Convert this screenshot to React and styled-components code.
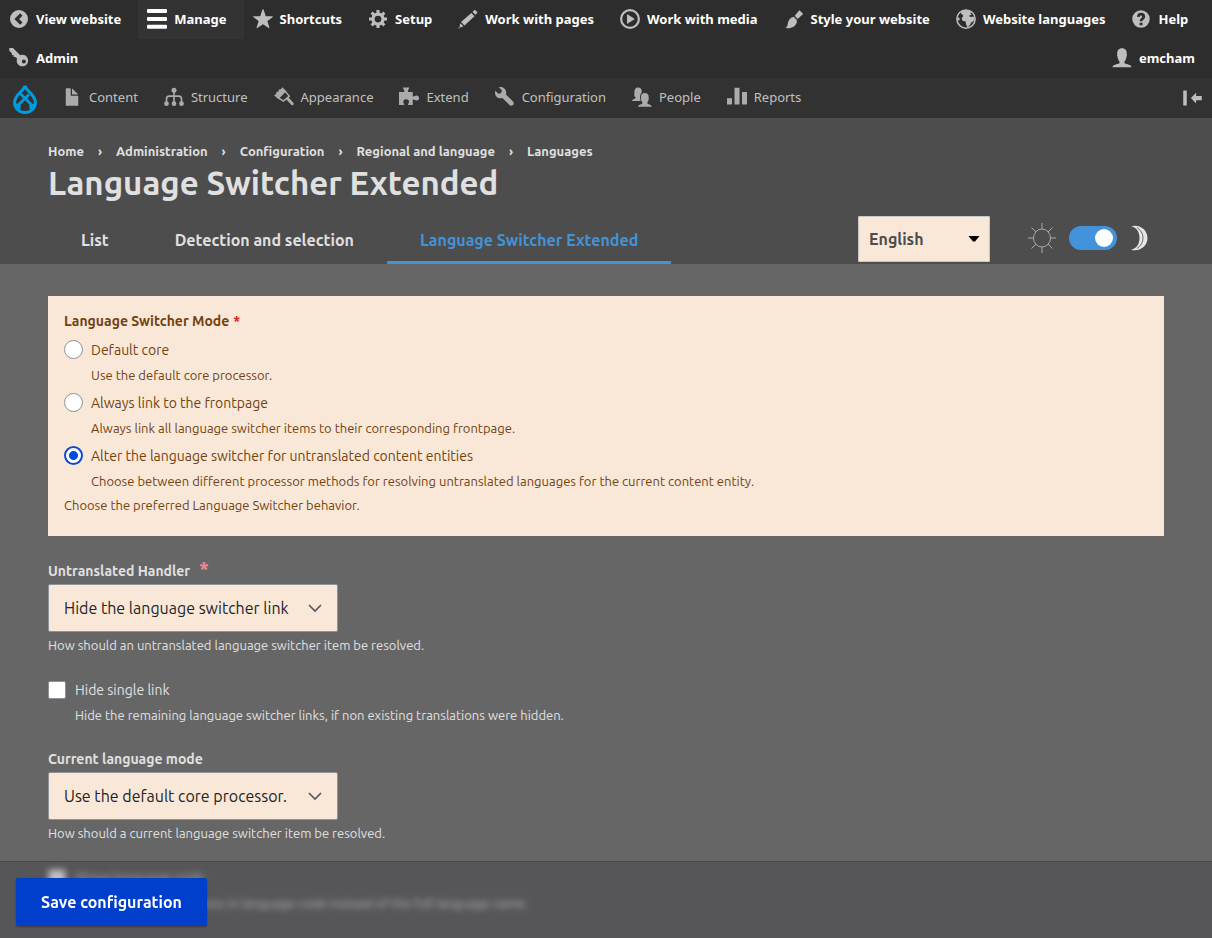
import React, { useState } from "react";
import styled, { createGlobalStyle } from "styled-components";

const SHORTCUTS = [
  { label: "View website", icon: "back" },
  { label: "Manage", icon: "menu", active: true },
  { label: "Shortcuts", icon: "star" },
  { label: "Setup", icon: "cog" },
  { label: "Work with pages", icon: "pencil" },
  { label: "Work with media", icon: "play" },
  { label: "Style your website", icon: "brush" },
  { label: "Website languages", icon: "globe" },
  { label: "Help", icon: "help" },
  { label: "Admin", icon: "key" },
];

const TRAY = [
  { label: "Content", icon: "file" },
  { label: "Structure", icon: "orgchart" },
  { label: "Appearance", icon: "roller" },
  { label: "Extend", icon: "puzzle" },
  { label: "Configuration", icon: "wrench" },
  { label: "People", icon: "people" },
  { label: "Reports", icon: "chart" },
];

const BREADCRUMBS = [
  "Home",
  "Administration",
  "Configuration",
  "Regional and language",
  "Languages",
];

const TABS = [
  "List",
  "Detection and selection",
  "Language Switcher Extended",
];

const MODES = [
  {
    id: "core",
    label: "Default core",
    help: "Use the default core processor.",
  },
  {
    id: "front",
    label: "Always link to the frontpage",
    help: "Always link all language switcher items to their corresponding frontpage.",
  },
  {
    id: "alter",
    label: "Alter the language switcher for untranslated content entities",
    help: "Choose between different processor methods for resolving untranslated languages for the current content entity.",
  },
];

const ICONS = {
  back: (
    <path
      fillRule="evenodd"
      d="M8 .8a7.2 7.2 0 1 0 0 14.4A7.2 7.2 0 0 0 8 .8zM8.9 3.4 4.3 8l4.6 4.6 1.9-1.9L8.1 8l2.7-2.7z"
    />
  ),
  menu: (
    <path d="M.8 0h14.4a.8.8 0 0 1 .8.8v1.6a.8.8 0 0 1-.8.8H.8a.8.8 0 0 1-.8-.8V.8A.8.8 0 0 1 .8 0zM.8 6.3h14.4a.8.8 0 0 1 .8.8v1.6a.8.8 0 0 1-.8.8H.8a.8.8 0 0 1-.8-.8V7.1a.8.8 0 0 1 .8-.8zM.8 12.6h14.4a.8.8 0 0 1 .8.8V15a.8.8 0 0 1-.8.8H.8A.8.8 0 0 1 0 15v-1.6a.8.8 0 0 1 .8-.8z" />
  ),
  star: (
    <path d="M8 .2c.2 0 .4.1.5.4l1.7 5.1h5.2c.5 0 .7.4.2.8l-4.1 3.1 1.6 5.2c.1.5-.1.7-.5.4L8 12.1l-4.6 3.1c-.4.3-.6.1-.5-.4l1.6-5.2L.4 6.5c-.5-.4-.3-.8.2-.8h5.2L7.5.6c.1-.3.3-.4.5-.4z" />
  ),
  cog: (
    <>
      <circle cx="8" cy="8" r="4" fill="none" stroke="currentColor" strokeWidth="2.6" />
      <path
        fill="none"
        stroke="currentColor"
        strokeWidth="2.5"
        d="M8 .8v3M8 12.2v3M.8 8h3M12.2 8h3M2.9 2.9 5 5M11 11l2.1 2.1M13.1 2.9 11 5M5 11l-2.1 2.1"
      />
    </>
  ),
  pencil: (
    <path d="m11.600 2.300 2.300 2.300.7-.7.700-.7c.3-.3.2-.6 0-.9l-1.300-1.300c-.3-.3-.7-.3-1 0zM10.700 3.200l2.500 2.500-8 7.500-2.800-2.800zM1.900 11.400l2.400 2.400-2.100 1-1-1zM.8 14.300l.8.8-1.400.6z" />
  ),
  play: (
    <>
      <circle cx="8" cy="8" r="7.1" fill="none" stroke="currentColor" strokeWidth="1.8" />
      <path d="M5.6 4.7v6.6a.4.4 0 0 0 .6.3l5.1-3.2a.5.5 0 0 0 0-.8L6.2 4.4a.4.4 0 0 0-.6.3z" />
    </>
  ),
  brush: (
    <path d="M12.6 1.2 15 3.5c.3.3.2.7-.2.9l-3.900 3.500-2.300-2.500 3.200-3.900c.2-.4.500-.5.800-.3zM7.800 6.200l2.400 2.500c.5 1.700-.4 3.900-2.200 5.200-1.900 1.400-4.500 1.600-7.100 1.300 1.200-.6 1.700-1.300 2-2.900.4-2.400 1.600-5.600 4.900-6.100z" />
  ),
  globe: (
    <>
      <circle cx="8" cy="8" r="7.3" fill="none" stroke="currentColor" strokeWidth="1.2" />
      <path d="M3.6 3.2 5.5 1.2 8 .7l4.4 1.4-.8 1.4.9 1-2.2.8 1.1 1 2.6-.4 1 1.9-1.4 2.3-1.3.5-1.3 2.4-1.7 1.8-1.3-2.6-.3-2.3L5.2 9.4 4.5 7.2l1.4-1.6-.8-1.3z" />
      <path d="M1.3 6.2 3 7.5 2.6 9.4l-1.5-.8z" />
    </>
  ),
  help: (
    <path
      fillRule="evenodd"
      d="M8 1a7 7 0 1 0 0 14A7 7 0 0 0 8 1zM6.9 10.9h2.3v2.1H6.9zM4.8 6.2C4.9 4.2 6.1 3 8.1 3c1.9 0 3.2 1.1 3.2 2.9 0 2.2-2 2.3-2.1 3.9H7c0-2.4 1.9-2.5 1.9-3.7 0-.6-.3-.9-.9-.9s-.9.4-1 1.1z"
    />
  ),
  key: (
    <path
      fillRule="evenodd"
      d="M.2 0h3L9 5.7c2.2-.6 4.2 0 5.3 1.5 1.5 1.9 1.3 4.8-.5 6.4-2 1.7-4.9 1.3-6.5-.5C6 11.6 5.9 9.9 6.5 8.4L5 7.1H3.7V5.7L2.3 5.6V4.1L.2 2.1zM11.9 9.2a1.6 1.6 0 1 0 0 3.2 1.6 1.6 0 0 0 0-3.2z"
    />
  ),
  person: (
    <path d="M.5 15.3c0-1.7 2.4-2 4.4-2.7.9-.3 1.3-.8 1.3-1.5C5 9.9 4.5 8.3 4.4 6.8 3.9 6 4 5.3 4.2 5 3.9 2 5.4.2 8 .2S12.1 2 11.8 5c.2.3.3 1-.2 1.800-.1 1.500-.6 3.100-1.800 4.300 0 .7.400 1.200 1.300 1.500 2 .7 4.400 1 4.400 2.700z" />
  ),
  file: (
    <path d="M12.5 7h-5A.5.5 0 0 1 7 6.500v-5a.5.5 0 0 0-.5-.5h-3a.5.5 0 0 0-.5.500v13a.5.5 0 0 0 .5.500h9a.5.5 0 0 0 .5-.5v-7a.5.5 0 0 0-.5-.5zM8.500 6h4c.3 0 .3-.2.100-.4L8.400 1.400c-.2-.2-.4-.1-.4.1v4c0 .3.200.5.500.5z" />
  ),
  orgchart: (
    <>
      <path
        fill="none"
        stroke="currentColor"
        strokeWidth="1.3"
        d="M8 3v10M2 13V9.5C2 8 3 7.3 4.2 7.3h7.6C13 7.3 14 8 14 9.5V13"
      />
      <circle cx="8" cy="2.5" r="2" />
      <circle cx="2" cy="13.3" r="1.9" />
      <circle cx="8" cy="13.3" r="1.9" />
      <circle cx="14" cy="13.3" r="1.9" />
    </>
  ),
  roller: (
    <>
      <path d="M0 6.5 1.8 5.6 1.9 4 3.6 3.6 4 1.9 5.8 1.5 6.7.2 9.5 3 3.2 9.4z" />
      <path fill="none" stroke="currentColor" strokeWidth="1.2" d="M3.6 8.8 9 3.4l3.2 3.900-4.600 4z" />
      <path d="m9.5 9.6 1.9-1.7 4.2 4.9c.8 1-.7 2.5-1.7 1.6z" />
    </>
  ),
  puzzle: (
    <path d="M0 4h4.2V2.800c0-.8-1-1.100-1-2.500h5c0 1.400-1 1.700-1 2.500V4H11v3.500c1.200.5 1.800-.7 3-.7a2 2 0 0 1 0 4c-1.200 0-1.800-1.100-3-.6v4.100H7.200c-.2-.8.8-1.500.8-2.500a2.300 2 0 0 0-4.600 0c0 1 1 1.700.8 2.500H0z" />
  ),
  wrench: (
    <path d="M14.416 11.586l-5.666-5.665c.15-.449.252-.921.252-1.421 0-2.485-2.016-4.5-4.502-4.5-.505 0-.981.102-1.434.255l2.431 2.431-.588 2.196-2.196.588L.268 3.025C.106 3.489 0 3.981 0 4.500 0 6.986 2.014 9 4.500 9c.5 0 .972-.102 1.421-.251l5.667 5.665c.781.781 2.047.781 2.828 0s.781-2.047 0-2.828z" />
  ),
  people: (
    <>
      <path d="M7.5 11.2H0c0-1.300 1.400-1.500 2.300-1.900.6-.3.500-.9.200-1.300C1.600 6.900 1.900 5.900 1.900 4 1.900 1.500 2.900.3 4.900.3s3.200 1.200 2.900 3.900z" />
      <path
        stroke="#323232"
        strokeWidth="1.6"
        paintOrder="stroke"
        d="M4.800 15.800c0-1.500 1.500-1.800 2.900-2.300.8-.3.800-.9.400-1.500-.9-1.300-.9-2.500-.9-3.900 0-2.200 1.200-3.300 3-3.300s3.200 1.100 3.200 3.300c0 1.400 0 2.600-.9 3.900-.4.600-.4 1.200.4 1.500 1.400.5 2.900.8 2.900 2.300z"
      />
    </>
  ),
  chart: <path d="M0 9h4v5H0zM6 .5h4V14H6zM12 4h4v10h-4z" />,
  collapse: (
    <path d="M1 2h2.8v12H1zM7.1 8l4.2-4.2v2.5h4.5v3.5h-4.5v2.5z" />
  ),
};

const Icon = ({ name }) => (
  <IconSvg viewBox="0 0 16 16" aria-hidden="true">
    {ICONS[name]}
  </IconSvg>
);

const SelectField = ({ id, label, value, help, required }) => (
  <div>
    <FieldLabel htmlFor={id}>
      {label}
      {required && <Asterisk>*</Asterisk>}
    </FieldLabel>
    <SelectWrap>
      <FieldSelect id={id} defaultValue={value}>
        <option>{value}</option>
      </FieldSelect>
      <Chevron viewBox="0 0 14 9" aria-hidden="true">
        <path d="M1 1l6 6 6-6" fill="none" stroke="currentColor" strokeWidth="1.6" />
      </Chevron>
    </SelectWrap>
    <Help>{help}</Help>
  </div>
);

const CheckField = ({ label, help }) => (
  <div>
    <Choice>
      <Checkbox type="checkbox" />
      {label}
    </Choice>
    <Help $indent>{help}</Help>
  </div>
);

const App = () => {
  const [mode, setMode] = useState("alter");
  const [dark, setDark] = useState(true);

  return (
    <>
      <GlobalStyle />
      <Page>
        <Toolbar aria-label="Administration toolbar">
          {SHORTCUTS.map(({ label, icon, active }) => (
            <ToolbarLink key={label} href="#" $active={active}>
              <Icon name={icon} />
              {label}
            </ToolbarLink>
          ))}
          <UserLink href="#">
            <Icon name="person" />
            emcham
          </UserLink>
        </Toolbar>
        <Tray aria-label="Administration menu">
          <HomeLink href="#" aria-label="Home">
            <Drop viewBox="0 0 24 30">
              <g fill="none" stroke="currentColor">
                <path
                  strokeWidth="3"
                  d="M12 1.8C10.8 7 1.6 10.6 1.6 18.6a10.4 10 0 0 0 20.8 0C22.4 10.6 13.2 7 12 1.8z"
                />
                <path
                  strokeWidth="2.8"
                  d="M7.500 9.800 18 20.200c1.200 1.200 2.500 1.200 3.500.4M16 10.500 6 20.200c-1.200 1.200-2.500 1.200-3.500.4M6.500 25.500c-1-2-.5-3.800.6-5M17.500 25.500c1-2 .5-3.800-.6-5"
                />
              </g>
            </Drop>
          </HomeLink>
          {TRAY.map(({ label, icon }) => (
            <TrayLink key={label} href="#">
              <Icon name={icon} />
              {label}
            </TrayLink>
          ))}
          <CollapseButton aria-label="Vertical orientation">
            <Icon name="collapse" />
          </CollapseButton>
        </Tray>

        <Header>
          <Breadcrumb aria-label="Breadcrumb">
            {BREADCRUMBS.map((crumb, i) => (
              <React.Fragment key={crumb}>
                {i > 0 && <span>›</span>}
                <a href="#">{crumb}</a>
              </React.Fragment>
            ))}
          </Breadcrumb>
          <Title>Language Switcher Extended</Title>
          <TabRow>
            {TABS.map((tab, i) => (
              <Tab key={tab} href="#" $active={i === 2}>
                {tab}
              </Tab>
            ))}
            <Tools>
              <SelectWrap>
                <LangSelect aria-label="Language" defaultValue="English">
                  <option>English</option>
                </LangSelect>
                <Caret viewBox="0 0 12 6" aria-hidden="true">
                  <path d="M.5 0h11L7 5.5H5z" />
                </Caret>
              </SelectWrap>
              <ThemeSwitch>
                <Sun viewBox="0 0 28 30" aria-hidden="true">
                  <ellipse cx="14" cy="15" rx="8.5" ry="9" />
                  <path d="M14 0v6M14 24v6M0 15h5.500M22.500 15H28M3.500 4.500 8 9M20 21l4.500 4.500M24.500 4.500 20 9M8 21l-4.500 4.500" />
                </Sun>
                <Switch
                  type="checkbox"
                  role="switch"
                  aria-label="Dark mode"
                  checked={dark}
                  onChange={() => setDark(!dark)}
                />
                <Moon viewBox="0 0 18 26" aria-hidden="true">
                  <path
                    fill="currentColor"
                    d="M1 1.3C8.500-1 17.500 4 17.500 13S8.500 27 1 24.700c5.500-1 8.500-5.500 8.500-11.700S6.500 2.300 1 1.300z"
                  />
                  <path
                    fill="none"
                    stroke="#4d4d4d"
                    strokeWidth="0.8"
                    d="M7 2.5c3.8 2.5 6 6 6 10.500s-2.200 8-6 10.500"
                  />
                </Moon>
              </ThemeSwitch>
            </Tools>
          </TabRow>
        </Header>

        <Form onSubmit={(event) => event.preventDefault()}>
          <Fields>
            <Panel>
              <Legend>
                Language Switcher Mode<Asterisk $small>*</Asterisk>
              </Legend>
              {MODES.map(({ id, label, help }) => (
                <ModeItem key={id}>
                  <Choice>
                    <Radio
                      type="radio"
                      name="mode"
                      checked={mode === id}
                      onChange={() => setMode(id)}
                    />
                    {label}
                  </Choice>
                  <Help $indent>{help}</Help>
                </ModeItem>
              ))}
              <PanelNote>Choose the preferred Language Switcher behavior.</PanelNote>
            </Panel>
            <SelectField
              id="untranslated"
              label="Untranslated Handler"
              value="Hide the language switcher link"
              help="How should an untranslated language switcher item be resolved."
              required
            />
            <CheckField
              label="Hide single link"
              help="Hide the remaining language switcher links, if non existing translations were hidden."
            />
            <SelectField
              id="current"
              label="Current language mode"
              value="Use the default core processor."
              help="How should a current language switcher item be resolved."
            />
            <CheckField
              label="Show language code"
              help="Show the link translations in language code instead of the full language name."
            />
          </Fields>
          <Actions>
            <SaveButton type="submit">Save configuration</SaveButton>
          </Actions>
        </Form>
      </Page>
    </>
  );
};

export default App;

const GlobalStyle = createGlobalStyle`
  * {
    box-sizing: border-box;
  }
  body {
    margin: 0;
    background-color: #666666;
    color: #e0e0e0;
    font-family: Ubuntu, "Noto Sans", sans-serif;
    font-size: 14px;
  }
  a {
    color: inherit;
    text-decoration: none;
  }
`;

const Page = styled.div`
  height: 100vh;
  overflow-y: auto;
  scrollbar-width: none;
`;

const IconSvg = styled.svg`
  width: 20px;
  height: 20px;
  flex: none;
  color: #bebebe;
  fill: currentColor;
`;

const Toolbar = styled.nav`
  display: flex;
  flex-wrap: wrap;
  background-color: #2d2d2d;
  font-family: "Noto Sans", sans-serif;
`;

const ToolbarLink = styled.a`
  height: 39px;
  padding: 0 17px 1px 9px;
  display: flex;
  align-items: center;
  gap: 7px;
  color: white;
  font-size: 13px;
  font-weight: 700;
  background-color: ${({ $active }) => ($active ? "#333333" : "transparent")};

  ${IconSvg} {
    color: ${({ $active }) => ($active ? "white" : "#bebebe")};
  }
`;

const UserLink = styled(ToolbarLink)`
  margin-left: auto;
`;

const Tray = styled.nav`
  height: 40px;
  display: flex;
  background-color: #323232;
  font-family: "Noto Sans", sans-serif;
`;

const HomeLink = styled.a`
  padding: 2px 16px 0 13px;
  display: flex;
  align-items: center;
`;

const Drop = styled.svg`
  width: 24px;
  height: 30px;
  color: #009cde;
`;

const TrayLink = styled(ToolbarLink)`
  height: 40px;
  padding-bottom: 2px;
  color: #c0c0c0;
  font-weight: 400;

  ${IconSvg} {
    color: #ababab;
  }
`;

const CollapseButton = styled.button`
  margin-left: auto;
  padding: 0 10px;
  display: flex;
  align-items: center;
  border: none;
  background: none;
`;

const Header = styled.header`
  padding: 25px 48px 0;
  background-color: #4d4d4d;
`;

const Breadcrumb = styled.nav`
  display: flex;
  gap: 14px;
  font-size: 13px;
  font-weight: 700;
  line-height: 16px;
`;

const Title = styled.h1`
  margin: 5px 0 14px;
  font-size: 33px;
  line-height: 38px;
`;

const TabRow = styled.div`
  display: flex;
`;

const Tab = styled.a`
  height: 48px;
  padding: 0 33px;
  line-height: 48px;
  font-size: 16px;
  font-weight: 700;
  color: ${({ $active }) => ($active ? "#4293d9" : "#e0e0e0")};
  box-shadow: ${({ $active }) => ($active ? "inset 0 -3px #4293d9" : "none")};
`;

const Tools = styled.div`
  height: 46px;
  margin-left: auto;
  padding-right: 16px;
  display: flex;
  gap: 38px;
`;

const SelectWrap = styled.div`
  display: inline-grid;
  align-items: center;
  vertical-align: top;

  > * {
    grid-area: 1 / 1;
  }
`;

const LangSelect = styled.select`
  width: 132px;
  height: 46px;
  padding: 0 10px;
  appearance: none;
  border: 1px solid #c4c8cc;
  border-radius: 1px;
  background-color: #f9e8d8;
  color: #4d4d4d;
  font-family: inherit;
  font-size: 16px;
  font-weight: 700;
`;

const Caret = styled.svg`
  width: 12px;
  height: 6px;
  margin-right: 10px;
  justify-self: end;
  pointer-events: none;
`;

const ThemeSwitch = styled.div`
  padding-bottom: 2px;
  display: flex;
  align-items: center;
  gap: 13px;
`;

const Sun = styled.svg`
  width: 28px;
  height: 30px;
  fill: none;
  stroke: #a8a8a8;
`;

const Switch = styled.input`
  width: 48px;
  height: 24px;
  margin: 0;
  padding: 3px 4px;
  display: flex;
  justify-content: flex-start;
  appearance: none;
  border-radius: 12px;
  background-color: #8e929c;

  &::before {
    content: "";
    width: 18px;
    height: 18px;
    border-radius: 50%;
    background-color: white;
  }

  &:checked {
    justify-content: flex-end;
    background-color: #4293d9;
  }
`;

const Moon = styled.svg`
  width: 18px;
  height: 26px;
  color: #e6e6e6;
`;

const Form = styled.form`
  margin: 0;
`;

const Fields = styled.div`
  padding: 32px 48px 24px;
  display: flex;
  flex-direction: column;
  gap: 24px;
`;

const Panel = styled.fieldset`
  margin: 0;
  padding: 16px 16px 22px;
  border: none;
  background-color: #f9e8d8;
  color: #73420f;
`;

const Legend = styled.legend`
  float: left;
  width: 100%;
  height: 18px;
  padding: 0;
  margin-bottom: 8px;
  font-weight: 700;
  line-height: 18px;
`;

const Asterisk = styled.span`
  margin-left: ${({ $small }) => ($small ? "4px" : "9px")};
  align-self: flex-start;
  color: ${({ $small }) => ($small ? "#dc2323" : "#f08a92")};
  font-size: ${({ $small }) => ($small ? "14px" : "20px")};
  line-height: 18px;
`;

const ModeItem = styled.div`
  clear: both;
  margin-bottom: 7px;
`;

const Choice = styled.label`
  height: 24px;
  display: flex;
  align-items: center;
  gap: 8px;
`;

const Help = styled.p`
  margin: 5px 0 0;
  padding-left: ${({ $indent }) => ($indent ? "27px" : "0")};
  font-size: 13px;
  line-height: 17px;
`;

const PanelNote = styled(Help)`
  margin: 0;
`;

const Radio = styled.input`
  width: 19px;
  height: 19px;
  margin: 0 0 2px;
  appearance: none;
  border: 1px solid #8e929c;
  border-radius: 50%;
  background-color: white;

  &:checked {
    border: 2px solid #0c4ad3;
    background-image: radial-gradient(circle, #004adc 4px, white 5px);
  }
`;

const Checkbox = styled.input`
  width: 18px;
  height: 18px;
  margin: 0 1px 0 0;
  appearance: none;
  border: 1px solid #8e929c;
  border-radius: 2px;
  background-color: white;
`;

const FieldLabel = styled.label`
  height: 20px;
  margin-bottom: 4px;
  display: flex;
  align-items: flex-end;
  font-weight: 700;
  line-height: 18px;
`;

const FieldSelect = styled.select`
  width: 290px;
  height: 48px;
  padding: 0 15px;
  appearance: none;
  border: 1px solid #8e929c;
  border-radius: 2px;
  background-color: #f9e8d8;
  color: #232429;
  font-family: inherit;
  font-size: 16px;
`;

const Chevron = styled.svg`
  width: 14px;
  height: 9px;
  margin-right: 16px;
  justify-self: end;
  color: #55565b;
  pointer-events: none;
`;

const Actions = styled.div`
  position: sticky;
  bottom: 0;
  padding: 16px 16px 12px;
  border-top: 1px solid #49494d;
  background-color: rgba(49, 49, 55, 0.3);
  backdrop-filter: blur(3px);
`;

const SaveButton = styled.button`
  min-width: 191px;
  height: 48px;
  padding: 0 24px;
  display: block;
  border: none;
  border-radius: 2px;
  background-color: #003ecc;
  box-shadow: 0 1px 2px rgba(0, 0, 0, 0.3);
  color: white;
  font-family: inherit;
  font-size: 16px;
  font-weight: 700;
`;
